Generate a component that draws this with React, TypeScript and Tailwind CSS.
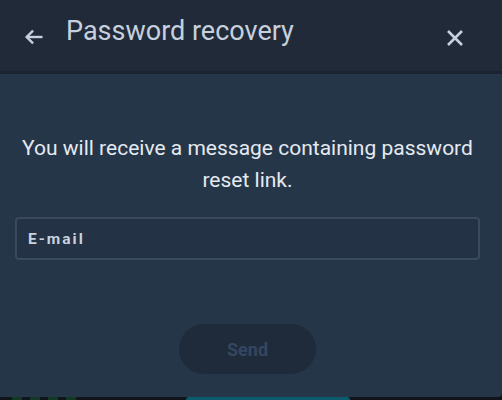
import { useState } from "react";

const BackArrow = () => (
  <svg width="22" height="22" viewBox="0 0 24 24" fill="none" stroke="currentColor" strokeWidth="2.6" strokeLinecap="square">
    <path d="M20 12H5" />
    <path d="M11 5l-7 7 7 7" strokeLinecap="butt" strokeLinejoin="miter" />
  </svg>
);

const CloseIcon = () => (
  <svg width="18" height="18" viewBox="0 0 18 18" fill="none" stroke="currentColor" strokeWidth="2.6">
    <path d="M2 2l14 14M16 2L2 16" />
  </svg>
);

const PasswordRecovery = () => {
  const [email, setEmail] = useState("");

  return (
    <div className="flex flex-col bg-[#263649] rounded-br-[4px] h-[397px]">
      <div className="flex items-center h-[74px] bg-[#212a39] border-b-[3px] border-[#1b2330] text-[#c6d1dd]">
        <button className="ml-[23px] mt-[3px] w-[22px] h-[22px] flex items-center justify-center">
          <BackArrow />
        </button>
        <h1 className="ml-[21px] mb-[8px] text-[27px] leading-none">
          Password recovery
        </h1>
        <button className="ml-auto mr-[38px] mt-[4px] flex items-center justify-center">
          <CloseIcon />
        </button>
      </div>

      <div className="flex flex-col items-center ml-[15px] w-[465px] pt-[58px]">
        <p className="text-[21px] leading-[32px] text-[#e4eaf0] text-center">
          You will receive a message containing password reset link.
        </p>

        <input
          value={email}
          onChange={(e) => setEmail(e.target.value)}
          placeholder="E-mail"
          className="mt-[21px] w-[465px] h-[43px] rounded-[4px] border-2 border-[#3a4a5e] bg-[#243245] px-[11px] text-[15.5px] font-bold tracking-[2px] text-[#c7d2de] placeholder:text-[#c7d2de] outline-none"
        />

        <button
          disabled
          className="mt-[64px] w-[137px] h-[50px] rounded-full bg-[#1f2a3a] text-[18px] font-bold text-[#354760]"
        >
          Send
        </button>
      </div>
    </div>
  );
};

export default function App() {
  return (
    <div className="w-[502px] h-[400px] overflow-hidden bg-[#0f151b] font-['Roboto',sans-serif]">
      <PasswordRecovery />
      <div className="flex h-[3px]">
        <div className="w-[186px] flex gap-[8px] pl-[12px]">
          <div className="w-[10px] bg-[#123826]" />
          <div className="w-[10px] bg-[#123826]" />
          <div className="w-[10px] bg-[#123826]" />
          <div className="w-[10px] bg-[#123826]" />
        </div>
        <div className="w-[164px] bg-[#0b5a6d] rounded-t-[3px]" />
      </div>
    </div>
  );
}
